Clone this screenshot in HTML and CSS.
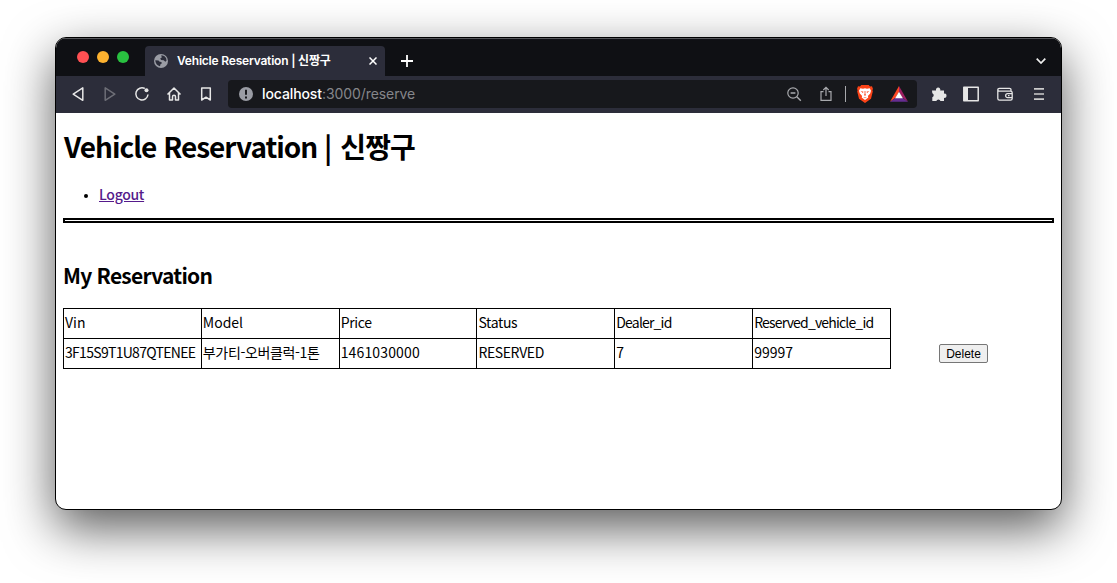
FILE: index.html
```html
<!DOCTYPE html>
<html lang="ko">
<head>
<meta charset="utf-8">
<title>Vehicle Reservation | 신짱구</title>
<link rel="stylesheet" href="styles.css">
</head>
<body>
<div class="window">
  <header class="tabstrip">
    <div class="lights"><i class="light red"></i><i class="light yellow"></i><i class="light green"></i></div>
    <div class="tab">
      <svg class="globe" width="14" height="14" viewBox="0 0 14 14"><circle cx="7" cy="7" r="7" fill="#9a9ca4"/><path d="M1.3 6.3l3.2.2 1.2 1.2 1.8.2.2 1.6-1.4 1.1-.2 1.6C3.600 12 1.500 9.700 1.300 6.300zM7.200 1.300c2 0 4 1.200 5 3.200l.3 2.200-1.200 1-1.600-1.400-2.600-.2-.9-1.500 1.600-1.200z" fill="#2c2d3a"/></svg>
      <span class="tab-title">Vehicle Reservation | 신짱구</span>
      <svg class="tab-close" width="8" height="8" viewBox="0 0 8 8"><path d="M.5.5l7 7M7.500.5l-7 7" stroke="#fff" stroke-width="1.500"/></svg>
    </div>
    <svg class="new-tab" width="12" height="12" viewBox="0 0 12 12"><path d="M6 0v12M0 6h12" stroke="#fff" stroke-width="1.800"/></svg>
    <svg class="chevron" width="10" height="6" viewBox="0 0 10 6"><path d="M.7.7L5 5 9.300.7" fill="none" stroke="#eee" stroke-width="1.700"/></svg>
  </header>
  <nav class="toolbar">
    <div class="nav-icons">
      <svg viewBox="0 0 16 16"><path d="M12.800 1.900v12.400L3.200 8.100z" class="line"/></svg>
      <svg viewBox="0 0 16 16" class="dim"><path d="M3.200 1.900v12.400L12.800 8.100z" class="line"/></svg>
      <svg viewBox="0 0 16 16"><path d="M10.800 2.500A6.100 6.100 0 1 0 14 8.500" class="line"/><circle cx="12.500" cy="4.200" r="2" fill="#e6e6e6"/></svg>
      <svg viewBox="0 0 16 16"><path d="M1.500 8.500L8 2l6.500 6.500M3.500 7v7h3v-3.200a1.500 1.500 0 0 1 3 0V14h3V7" class="line"/></svg>
      <svg viewBox="0 0 16 16"><path d="M3.700 2h8.600v12L8 11.200 3.700 14z" class="line"/></svg>
    </div>
    <div class="address">
      <svg class="info" width="14" height="14" viewBox="0 0 14 14"><circle cx="7" cy="7" r="7" fill="#9a9ca4"/><path d="M7 2.800v5M7 9.400v2" stroke="#17181c" stroke-width="2"/></svg>
      <span class="url"><b>localhost</b>:3000/reserve</span>
      <svg class="zoom" width="16" height="16" viewBox="0 0 16 16"><circle cx="7" cy="7" r="5.200" fill="none" stroke="#a8a9ad" stroke-width="1.200"/><path d="M10.800 10.800l4 4M4.600 7h4.800" stroke="#a8a9ad" stroke-width="1.400"/></svg>
      <svg class="share" width="12" height="16" viewBox="0 0 12 16"><path d="M3.500 5.600H1v8.800h10V5.600H8.500M6 10V1.500M3.300 4L6 1.300 8.700 4" fill="none" stroke="#a8a9ad" stroke-width="1.200"/></svg>
      <i class="divider"></i>
      <svg class="lion" width="16" height="18" viewBox="0 0 16 18"><path d="M4.300 0h7.400l1.300 1.400 2-.1 1 2.700-.6 1 .4 1.500-1.800 7.200L8 18l-6-4.300L.2 6.500.6 5 0 4l1-2.700 2 .1z" fill="#fb4317"/><path d="M3.300 3.200L6 3.700l2-.4 2 .4 2.700-.5 1.300 2.600-.8 2.700-2.300 2.400.4 1.600L8 15l-3.300-2.500.4-1.600-2.300-2.400L2 5.800z" fill="#fff"/><path d="M3.700 6l2.800.8-.6 1.200zM12.300 6l-2.800.8.6 1.200zM7.600 6h.8v3.200l.8.7L8 10.700l-1.200-.8.8-.7zM6.100 12L8 12.600l1.900-.6L8 13.200z" fill="#fb4317"/></svg>
      <svg class="bat" width="18" height="16" viewBox="0 0 18 16"><path d="M9 0v6L5.300 12 0 15.700z" fill="#ff4724"/><path d="M9 0l9 15.700L12.700 12 9 6z" fill="#9e1f63"/><path d="M0 15.700L5.300 12h7.400l5.300 3.700z" fill="#662d91"/><path d="M9 5.800l3.900 6.400H5.100z" fill="#fff"/></svg>
    </div>
    <div class="tools">
      <svg class="puzzle" viewBox="0 0 16 16"><path d="M1 4.500h4.100a2.200 2.200 0 1 1 4.100 0H13v3.200a2.100 2.100 0 1 1 0 4.100V15H9.500a2.200 2.200 0 0 0-4.200 0H1.300v-3.700a2.200 2.200 0 0 0 0-4.100z" fill="#e6e6e6"/></svg>
      <svg viewBox="0 0 16 16"><path d="M.8 1.300h14.400v13.400H.8z" class="line"/><path d="M1 1h4v14H1z" fill="#e6e6e6"/></svg>
      <svg viewBox="0 0 16 16"><path d="M14 5.200V3.800Q14 2.300 12.500 2.300H2.500Q.8 2.300.8 4v8.500q0 1.700 1.700 1.700h11q1.700 0 1.700-1.700V6.800q0-1.600-1.700-1.600H3Q.8 5.200.8 3.700M15 7.600h-4.300a2 2 0 0 0 0 4.100H15M11 9.700h1.500" class="line thin"/></svg>
      <svg viewBox="0 0 16 16"><path d="M3 2.900h10M3 8h10M3 13.100h10" stroke="#ccc" stroke-width="1.600"/></svg>
    </div>
  </nav>
  <main class="page">
    <h1>Vehicle Reservation | <span class="ko">신짱구</span></h1>
    <ul><li><a href="#">Logout</a></li></ul>
    <div class="rule"></div>
    <h2>My Reservation</h2>
    <div class="listing">
      <table>
        <tr><td>Vin</td><td>Model</td><td><span class="head">Price</span></td><td><span class="head">Status</span></td><td><span class="id-label">Dealer_id</span></td><td><span class="id-label">Reserved_vehicle_id</span></td></tr>
        <tr><td><span class="vin">3F15S9T1U87QTENEE</span></td><td><span class="model">부가티-오버클럭-1톤</span></td><td><span class="price">1461030000</span></td><td><span class="status">RESERVED</span></td><td>7</td><td>99997</td></tr>
      </table>
      <button class="delete">Delete</button>
    </div>
  </main>
</div>
</body>
</html>
```
FILE: styles.css
```css
* { box-sizing: border-box; }
body { margin: 0; height: 583px; padding: 37px 0 0 55px; background: #fff; overflow: hidden; }
svg { display: block; flex: none; }
.window { width: 1007px; height: 473px; border: 1px solid #000; border-radius: 11px; background: #fff; overflow: hidden; box-shadow: 0 18px 50px rgba(0,0,0,.65); }
.tabstrip { height: 38px; background: #0f1014; border-top: 1px solid #55565a; display: flex; align-items: flex-start; }
.lights { display: flex; gap: 8px; padding: 12px 0 0 21px; width: 89px; }
.light { width: 12px; height: 12px; border-radius: 50%; }
.red { background: #ff5053; }
.yellow { background: #fdb22f; }
.green { background: #29c140; }
.tab { width: 240px; height: 30px; margin-top: 7px; background: #2c2d3a; border-radius: 4px 4px 0 0; display: flex; align-items: center; padding: 0 8px 0 9px; }
.tab-title { color: #fff; font: 600 12px/16px Inter, "Noto Sans CJK KR", sans-serif; letter-spacing: -.2px; margin-left: 9px; white-space: nowrap; }
.tab-close { margin-left: auto; }
.new-tab { margin: 16px 0 0 16px; }
.chevron { margin: 19px 15px 0 auto; }
.toolbar { height: 37px; background: #2c2d3a; display: flex; padding-top: 4px; }
.nav-icons { display: flex; gap: 16px; padding: 6px 0 0 14px; width: 172px; }
.nav-icons svg, .tools svg { width: 16px; height: 16px; }
.line { fill: none; stroke: #e6e6e6; stroke-width: 1.5; stroke-linejoin: round; }
.thin { stroke-width: 1.3; }
.dim { opacity: .35; }
.address { width: 689px; height: 28px; background: #17181c; border-radius: 4px; display: flex; align-items: center; padding-left: 11px; }
.url { margin-left: 9px; color: #85868a; font: 14px/20px Inter, sans-serif; letter-spacing: -.08px; }
.url b { color: #fff; font-weight: 500; letter-spacing: -.1px; }
.zoom { margin-left: auto; }
.share { margin-left: 18px; }
.divider { width: 1px; height: 16px; background: #a8a9ad; margin-left: 13px; }
.lion { margin-left: 11px; }
.bat { margin: 0 9px 0 17px; }
.tools { display: flex; gap: 18px; padding: 6px 0 0 14px; }
.tools .puzzle { margin-right: -2px; }
.page { padding: 0 7px; color: #000; font: 14px/20px "Noto Sans CJK KR", sans-serif; }
h1 { margin: 15px 0 0; padding-left: 1px; font-size: 28px; line-height: 36px; font-weight: 700; white-space: nowrap; letter-spacing: -1px; }
.ko { letter-spacing: -.8px; margin-left: 2px; }
ul { margin: 20px 0 0; padding-left: 36px; height: 20px; }
li::marker { font-size: 11px; }
a { color: #551a8b; font-weight: 500; letter-spacing: -.3px; }
.rule { height: 5px; border: 2px solid #000; width: 991px; margin-top: 14px; }
h2 { margin: 37px 0 0; font-size: 21px; line-height: 30px; font-weight: 700; letter-spacing: -.75px; }
.listing { display: flex; margin-top: 18px; }
table { width: 828px; table-layout: fixed; border-collapse: collapse; }
td { border: 1px solid #000; height: 30px; padding: 0 1px 4px; line-height: 20px; white-space: nowrap; }
.head { letter-spacing: -.35px; }
.id-label { letter-spacing: -.82px; }
.vin { letter-spacing: -.7px; }
.model { letter-spacing: -.35px; }
.price { letter-spacing: .15px; }
.status { letter-spacing: -.4px; }
.delete { width: 49px; height: 19px; margin: 36px 0 0 48px; padding: 1px 0 0; background: #efefef; border: 1px solid #767676; border-radius: 2px; font: 12px/15px "Liberation Sans", sans-serif; color: #000; }
```
